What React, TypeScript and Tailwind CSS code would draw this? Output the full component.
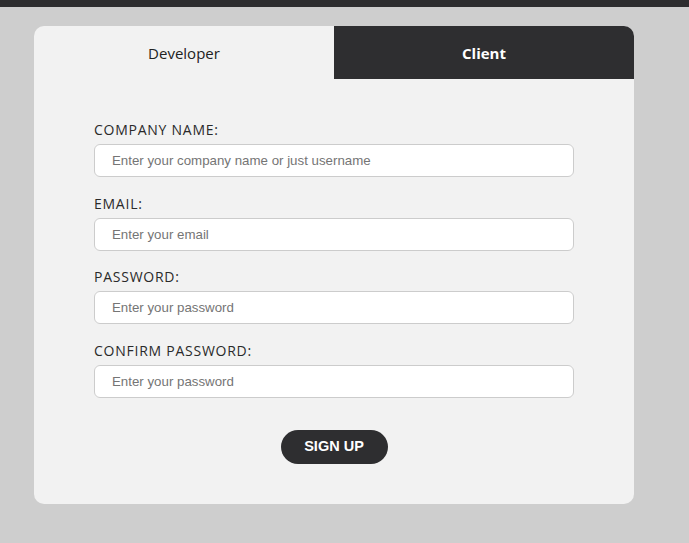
import React from "react";

const fields = [
  { label: "COMPANY NAME:", placeholder: "Enter your company name or just username", type: "text" },
  { label: "EMAIL:", placeholder: "Enter your email", type: "email" },
  { label: "PASSWORD:", placeholder: "Enter your password", type: "password" },
  { label: "CONFIRM PASSWORD:", placeholder: "Enter your password", type: "password" },
];

const App: React.FC = () => {
  return (
    <div className="min-h-[543px] bg-[#cecece] font-['Open_Sans',sans-serif]">
      {/* Top bar */}
      <div className="h-[7px] bg-[#2d2d2f]" />

      <div className="flex justify-center pt-[19px] pr-[21px]">
        <div className="w-[600px] rounded-[10px] bg-[#f2f2f2] overflow-hidden">
          {/* Tabs */}
          <div className="flex h-[53px]">
            <button className="flex-1 pt-[2px] text-[15px] text-[#222]">Developer</button>
            <button className="flex-1 bg-[#2e2e30] pt-[2px] text-[15px] font-bold text-white">
              Client
            </button>
          </div>

          {/* Form */}
          <form className="flex flex-col px-[60px] pt-[41px] pb-[40px]">
            {fields.map((f) => (
              <div key={f.label} className="flex flex-col mb-[16.5px]">
                <label className="text-[14px] leading-[20px] tracking-[0.75px] text-[#2a2a2a]">
                  {f.label}
                </label>
                <input
                  type={f.type}
                  placeholder={f.placeholder}
                  className="mt-[4px] h-[33px] rounded-[6px] border border-[#cccccc] bg-white px-[17px] font-['Liberation_Sans',Arial,sans-serif] text-[13.3px] text-[#333] placeholder:text-[#757575] outline-none"
                />
              </div>
            ))}
            <div className="flex justify-center pt-[16px]">
              <button
                type="button"
                className="h-[34px] w-[107px] rounded-full bg-[#2e2e30] font-['Liberation_Sans',Arial,sans-serif] text-[14.5px] font-bold text-white"
              >
                SIGN UP
              </button>
            </div>
          </form>
        </div>
      </div>
    </div>
  );
};

export default App;
